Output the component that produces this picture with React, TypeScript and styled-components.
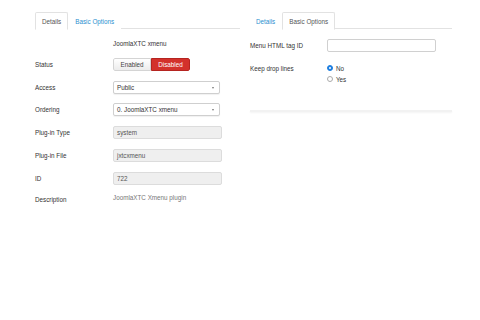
import React from "react";
import styled, { createGlobalStyle } from "styled-components";

const Global = createGlobalStyle`
  html, body { margin: 0; padding: 0; background: #fff; }
  body { font-family: "Liberation Sans", Arial, sans-serif; font-size: 6.3px; color: #333; }
`;

const Page = styled.div`
  display: flex;
  gap: 9px;
  padding: 12px 0 0 35px;
  width: 480px;
  height: 320px;
  box-sizing: border-box;
`;

const Panel = styled.div<{ $w: number }>`
  width: ${(p) => p.$w}px;
  display: flex;
  flex-direction: column;
`;

const TabBar = styled.div`
  display: flex;
  height: 17px;
  border-bottom: 1px solid #e2e2e2;
  box-sizing: border-box;
`;

const Tab = styled.div<{ $active?: boolean }>`
  display: flex;
  align-items: center;
  padding: 0 6px;
  height: 18px;
  box-sizing: border-box;
  color: ${(p) => (p.$active ? "#555" : "#2b8fcf")};
  background: #fff;
  border: 1px solid ${(p) => (p.$active ? "#e2e2e2" : "transparent")};
  border-bottom-color: ${(p) => (p.$active ? "#fff" : "transparent")};
  border-radius: 2px 2px 0 0;
`;

const Form = styled.div<{ $top: number; $gap: number }>`
  display: flex;
  flex-direction: column;
  gap: ${(p) => p.$gap}px;
  padding-top: ${(p) => p.$top}px;
`;

const Row = styled.div<{ $h?: number; $start?: boolean; $mt?: number }>`
  display: flex;
  align-items: ${(p) => (p.$start ? "flex-start" : "center")};
  min-height: ${(p) => p.$h ?? 13}px;
  margin-top: ${(p) => p.$mt ?? 0}px;
`;

const Label = styled.div<{ $pl?: number }>`
  width: 78px;
  padding-left: ${(p) => p.$pl ?? 0}px;
  box-sizing: border-box;
  color: #333;
  flex-shrink: 0;
`;

const Title = styled.div`
  margin-left: 78px;
  height: 13px;
  margin-bottom: -2px;
  display: flex;
  align-items: center;
  color: #333;
`;

const Toggle = styled.div`
  display: flex;
  height: 13px;
  border-radius: 2px;
  overflow: hidden;
`;

const ToggleBtn = styled.div<{ $on?: boolean }>`
  display: flex;
  align-items: center;
  justify-content: center;
  width: ${(p) => (p.$on ? 39 : 38)}px;
  box-sizing: border-box;
  color: ${(p) => (p.$on ? "#fff" : "#444")};
  background: ${(p) => (p.$on ? "#d3312b" : "linear-gradient(#fff, #ececec)")};
  border: 1px solid ${(p) => (p.$on ? "#b52420" : "#d4d4d4")};
  border-radius: ${(p) => (p.$on ? "0 2px 2px 0" : "2px 0 0 2px")};
`;

const Select = styled.div`
  position: relative;
  width: 107px;
  height: 13px;
  box-sizing: border-box;
  border: 1px solid #cfcfcf;
  border-radius: 2px;
  background: #fff;
  box-shadow: 0 1px 1px rgba(0, 0, 0, 0.06);
  display: flex;
  align-items: center;
  padding-left: 3px;
  color: #333;
`;

const Caret = styled.span`
  position: absolute;
  right: 5px;
  top: 5px;
  width: 0;
  height: 0;
  border-left: 1.5px solid transparent;
  border-right: 1.5px solid transparent;
  border-top: 2px solid #777;
`;

const Input = styled.div<{ $ro?: boolean; $w: number }>`
  width: ${(p) => p.$w}px;
  height: 13px;
  box-sizing: border-box;
  border: 1px solid ${(p) => (p.$ro ? "#dcdcdc" : "#d0d0d0")};
  border-radius: 2px;
  background: ${(p) => (p.$ro ? "#efefef" : "#fff")};
  display: flex;
  align-items: center;
  padding-left: 3px;
  color: #555;
`;

const Value = styled.div`
  color: #777;
  margin-top: -3px;
`;

const Radios = styled.div`
  display: flex;
  flex-direction: column;
  gap: 4px;
  margin-top: 0;
`;

const RadioRow = styled.div`
  display: flex;
  align-items: center;
  gap: 3px;
  height: 7px;
`;

const Radio = styled.span<{ $on?: boolean }>`
  width: 6px;
  height: 6px;
  border-radius: 50%;
  box-sizing: border-box;
  background: ${(p) => (p.$on ? "#1f7fe0" : "#fff")};
  border: 1px solid ${(p) => (p.$on ? "#1f7fe0" : "#aaa")};
  display: flex;
  align-items: center;
  justify-content: center;
  &::after {
    content: "";
    width: 2px;
    height: 2px;
    border-radius: 50%;
    background: ${(p) => (p.$on ? "#fff" : "transparent")};
  }
`;

const Divider = styled.div`
  margin-top: 27px;
  margin-left: 1px;
  height: 2px;
  background: #f2f2f2;
  box-shadow: 0 1px 2px rgba(0, 0, 0, 0.05);
`;

export default function App() {
  return (
    <>
      <Global />
      <Page>
        <Panel $w={205}>
          <TabBar>
            <Tab $active>Details</Tab>
            <Tab>Basic Options</Tab>
          </TabBar>
          <Form $top={8} $gap={9.8}>
            <Title>JoomlaXTC xmenu</Title>
            <Row $h={14}>
              <Label>Status</Label>
              <Toggle>
                <ToggleBtn>Enabled</ToggleBtn>
                <ToggleBtn $on>Disabled</ToggleBtn>
              </Toggle>
            </Row>
            <Row $mt={-1}>
              <Label>Access</Label>
              <Select>
                Public
                <Caret />
              </Select>
            </Row>
            <Row>
              <Label>Ordering</Label>
              <Select>
                0. JoomlaXTC xmenu
                <Caret />
              </Select>
            </Row>
            <Row>
              <Label>Plug-in Type</Label>
              <Input $ro $w={109}>system</Input>
            </Row>
            <Row>
              <Label>Plug-in File</Label>
              <Input $ro $w={109}>jxtcxmenu</Input>
            </Row>
            <Row>
              <Label>ID</Label>
              <Input $ro $w={109}>722</Input>
            </Row>
            <Row $mt={-2}>
              <Label>Description</Label>
              <Value>JoomlaXTC Xmenu plugin</Value>
            </Row>
          </Form>
        </Panel>
        <Panel $w={203}>
          <TabBar>
            <Tab>Details</Tab>
            <Tab $active>Basic Options</Tab>
          </TabBar>
          <Form $top={10} $gap={12.5}>
            <Row>
              <Label $pl={1}>Menu HTML tag ID</Label>
              <Input $w={109} />
            </Row>
            <Row $start>
              <Label $pl={1}>Keep drop lines</Label>
              <Radios>
                <RadioRow>
                  <Radio $on />
                  No
                </RadioRow>
                <RadioRow>
                  <Radio />
                  Yes
                </RadioRow>
              </Radios>
            </Row>
          </Form>
          <Divider />
        </Panel>
      </Page>
    </>
  );
}
